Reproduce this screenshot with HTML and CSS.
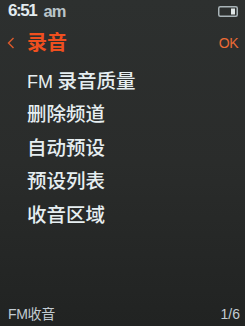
FILE: index.html
```html
<!DOCTYPE html>
<html>
<head>
<meta charset="utf-8">
<link rel="stylesheet" href="styles.css">
</head>
<body>
<div class="screen">
  <div class="status">
    <span class="time">6:51</span><span class="ampm">am</span>
    <svg class="battery" width="20" height="11" viewBox="0 0 20 11">
      <rect x="0.75" y="0.75" width="18.5" height="9.5" rx="1.5" fill="none" stroke="#a9b4b8" stroke-width="1.5"/>
      <rect x="13" y="2.5" width="4" height="6" fill="#dfe6e6"/>
    </svg>
  </div>
  <div class="header">
    <svg class="back" width="8" height="12" viewBox="0 0 8 12">
      <polyline points="6.5,1 1.5,6 6.5,11" fill="none" stroke="#dc5a2c" stroke-width="1.4"/>
    </svg>
    <span class="title">录音</span>
    <span class="ok">OK</span>
  </div>
  <ul class="menu">
    <li class="item"><span class="latin">FM</span> 录音质量</li>
    <li class="item">删除频道</li>
    <li class="item">自动预设</li>
    <li class="item">预设列表</li>
    <li class="item">收音区域</li>
  </ul>
  <div class="footer">
    <span class="label">FM收音</span>
    <span class="page">1/6</span>
  </div>
</div>
</body>
</html>
```
FILE: styles.css
```css
html, body {
  margin: 0;
  padding: 0;
}
body {
  width: 245px;
  height: 326px;
  overflow: hidden;
  background: #262827;
}
.screen {
  width: 245px;
  height: 326px;
  display: flex;
  flex-direction: column;
  background: linear-gradient(180deg, #2d302f 0%, #2a2c2b 50%, #212322 100%);
  font-family: "Liberation Sans", "Noto Sans CJK SC", sans-serif;
}
.status {
  height: 22px;
  display: flex;
  align-items: center;
  padding: 0 7px 0 8px;
  color: #e2ebef;
}
.time {
  font-size: 17px;
  font-weight: bold;
  letter-spacing: -1.4px;
  line-height: 22px;
}
.ampm {
  font-size: 16.5px;
  margin-left: 7px;
  color: #b9c4c9;
  letter-spacing: -0.8px;
  font-weight: bold;
  line-height: 22px;
}
.battery {
  margin-left: auto;
  display: block;
}
.header {
  height: 40px;
  display: flex;
  align-items: center;
  padding: 0 7px 0 7px;
}
.back {
  display: block;
  margin-top: 2px;
}
.title {
  margin-left: 12px;
  font-family: "Noto Sans CJK SC", sans-serif;
  font-size: 20px;
  font-weight: bold;
  color: #f04f1f;
  line-height: 40px;
}
.ok {
  margin-left: auto;
  font-size: 14px;
  color: #ea6a35;
  letter-spacing: -0.5px;
  line-height: 40px;
  margin-top: 1px;
}
.menu {
  list-style: none;
  margin: 0;
  padding: 1px 0 0 27px;
  flex: 1;
}
.item {
  height: 33.4px;
  line-height: 33.4px;
  font-size: 19.5px;
  font-weight: 500;
  color: #e6eef1;
  font-family: "Noto Sans CJK SC", sans-serif;
  white-space: nowrap;
}
.latin {
  font-family: "Liberation Sans", sans-serif;
  font-size: 18px;
  font-weight: normal;
}
.footer {
  height: 24px;
  display: flex;
  align-items: center;
  justify-content: space-between;
  padding: 0 5px 0 8px;
  color: #c2ccd3;
  font-size: 14px;
  line-height: 24px;
}
.label {
  letter-spacing: -0.3px;
}
```
